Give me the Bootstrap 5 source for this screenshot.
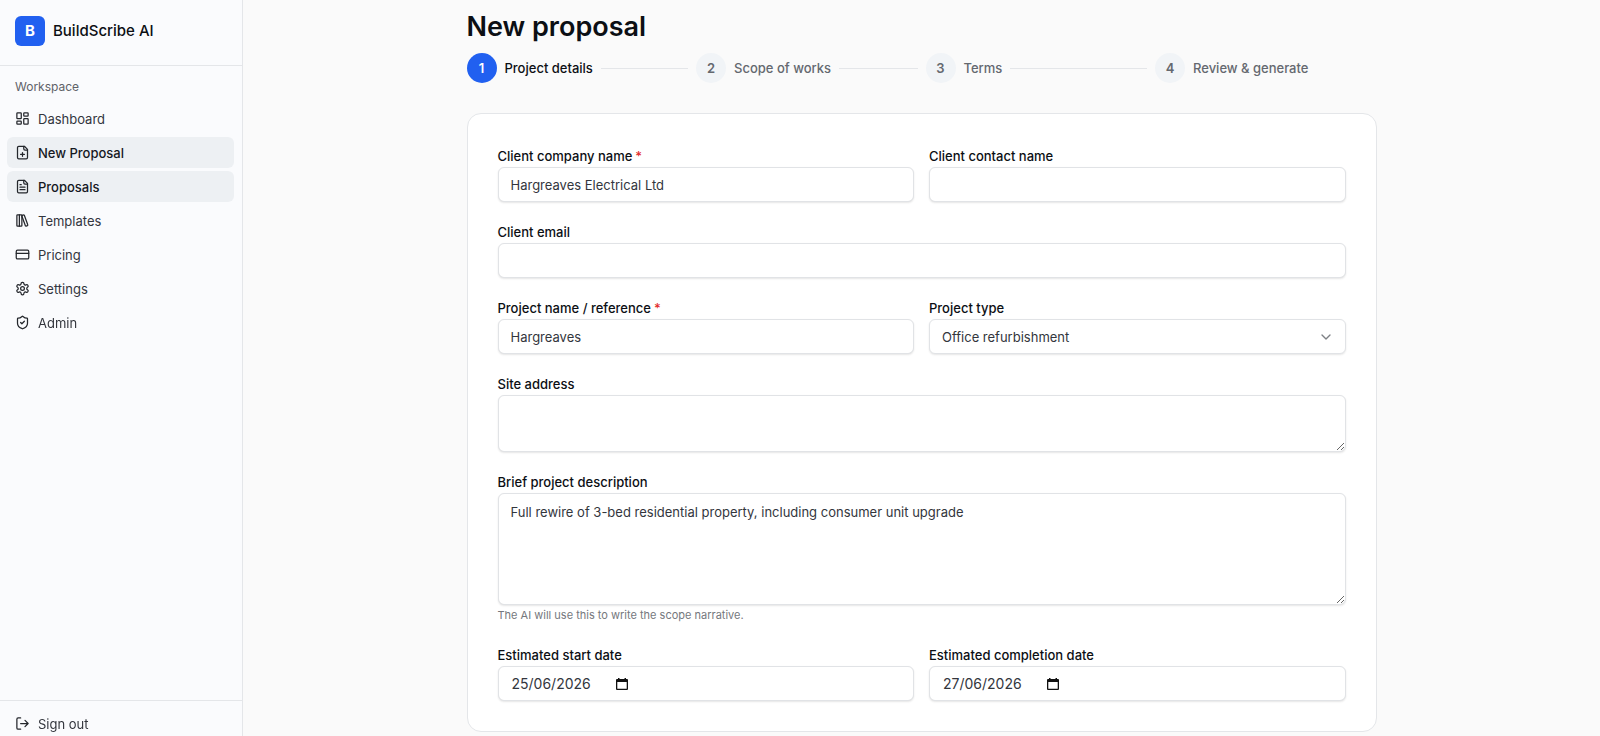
<!DOCTYPE html>
<html lang="en-GB">
<head>
<meta charset="utf-8">
<meta name="viewport" content="width=device-width, initial-scale=1">
<title>New proposal – BuildScribe AI</title>
<link href="https://cdn.jsdelivr.net/npm/bootstrap@5.3.0/dist/css/bootstrap.min.css" rel="stylesheet">
<style>
  :root { --line: #e4e6e9; --ink: #0c0f14; --muted: #64686f; --brand: #2160f0; }
  body { font-family: Inter, "Liberation Sans", sans-serif; font-size: 13px; line-height: 20px; color: var(--ink); background: #fafafa; }
  svg { fill: none; stroke: currentColor; stroke-width: 2; stroke-linecap: round; stroke-linejoin: round; flex: none; }
  .sidebar { width: 243px; height: 100vh; background: #fafbfd; border-right: 1px solid var(--line); }
  .brand-row { height: 66px; padding: 0 15px 4px; gap: 8px; border-bottom: 1px solid var(--line); font-size: 15px; font-weight: 500; }
  .brand-tile { width: 30px; height: 30px; border-radius: 6px; background: var(--brand); color: #fff; }
  .menu-title { font-size: 12px; padding: 11px 15px 0; color: #5f6268; }
  .menu { padding: 6px 8px 0 7px; gap: 3px; }
  .menu-link { height: 31px; padding: 0 8px; gap: 8px; border-radius: 6px; color: #33363d; text-decoration: none; border: 0; background: none; font-size: 13px; }
  .menu-link svg { width: 15px; height: 15px; color: #24272c; }
  .menu-link.current { background: #edf0f3; color: #16191f; font-weight: 500; }
  .side-foot { border-top: 1px solid var(--line); height: 36px; padding: 7px 8px 0 7px; }
  .page { max-width: 910px; padding: 9px 0 3px; }
  h1 { font-size: 27px; line-height: 36px; font-weight: 600; margin-bottom: 8px; }
  .steps { gap: 8px; margin-bottom: 30px; color: var(--muted); font-weight: 500; }
  .step { flex: 1 1 0; gap: 8px; white-space: nowrap; }
  .step-dot { width: 30px; height: 30px; border-radius: 50%; background: #f1f4f7; font-weight: 600; flex: none; }
  .step::after { content: ""; flex: 1; height: 1px; background: var(--line); }
  .step:last-child::after { display: none; }
  .step.active { color: var(--ink); }
  .step.active .step-dot { background: var(--brand); color: #fff; }
  .panel { background: #fff; border: 1px solid var(--line); border-radius: 14px; padding: 30px; }
  .fields { display: grid; grid-template-columns: 1fr 1fr; gap: 18px 15px; }
  .wide { grid-column: 1 / -1; }
  .fields label { display: block; padding: 2px 0 1px; line-height: 20px; font-weight: 500; }
  .req { color: #e32b2b; margin-left: 3px; }
  .fields .form-control, .fields .form-select { display: block; height: 35px; padding: 0 12px; font-size: 13px; line-height: 20px; color: #33363d; border: 1px solid #e1e3e6; border-radius: 6px; background-color: #fff; box-shadow: 0 1px 2px rgba(0,0,0,.1); }
  .fields .form-select { background-image: url("data:image/svg+xml,%3Csvg xmlns='http://www.w3.org/2000/svg' viewBox='0 0 24 24' fill='none' stroke='%237d8085' stroke-width='2' stroke-linecap='round' stroke-linejoin='round'%3E%3Cpath d='m6 9 6 6 6-6'/%3E%3C/svg%3E"); background-size: 16px 16px; background-position: right 11px center; }
  .fields textarea.form-control { padding: 8px 12px; min-height: 57px; }
  .fields textarea.form-control.tall { height: 112px; }
  .hint { color: #75787d; font-size: 11px; line-height: 20px; }
  .date-box input { width: 94px; border: 0; padding: 0 0 0 1px; outline: 0; background: none; color: inherit; font-size: 14px; }
  .date-box button { border: 0; background: none; padding: 0; margin-left: 10px; color: #111; }
  .date-box svg { stroke: none; fill: currentColor; }
</style>
</head>
<body>
<div class="d-flex">
  <aside class="sidebar d-flex flex-column flex-shrink-0 sticky-top">
    <div class="brand-row d-flex align-items-center">
      <span class="brand-tile d-flex align-items-center justify-content-center fw-bold">B</span>
      <span>BuildScribe AI</span>
    </div>
    <div class="menu-title">Workspace</div>
    <nav class="menu d-flex flex-column flex-grow-1">
      <a class="menu-link d-flex align-items-center" href="#"><svg viewBox="0 0 24 24"><rect x="3" y="3" width="7" height="9" rx="1"/><rect x="14" y="3" width="7" height="5" rx="1"/><rect x="14" y="12" width="7" height="9" rx="1"/><rect x="3" y="16" width="7" height="5" rx="1"/></svg>Dashboard</a>
      <a class="menu-link current d-flex align-items-center" href="#"><svg viewBox="0 0 24 24"><path d="M15 2H6a2 2 0 0 0-2 2v16a2 2 0 0 0 2 2h12a2 2 0 0 0 2-2V7Z"/><path d="M14 2v4a2 2 0 0 0 2 2h4M9 15h6M12 12v6"/></svg>New Proposal</a>
      <a class="menu-link current d-flex align-items-center" href="#"><svg viewBox="0 0 24 24"><path d="M15 2H6a2 2 0 0 0-2 2v16a2 2 0 0 0 2 2h12a2 2 0 0 0 2-2V7Z"/><path d="M14 2v4a2 2 0 0 0 2 2h4M10 9H8M16 13H8M16 17H8"/></svg>Proposals</a>
      <a class="menu-link d-flex align-items-center" href="#"><svg viewBox="0 0 24 24"><rect x="3" y="3" width="8" height="18" rx="1"/><path d="M7 3v18M20.4 18.9c.2.5-.1 1.1-.6 1.3l-1.9.7c-.5.2-1.1-.1-1.3-.6L11.1 5.1c-.2-.5.1-1.1.6-1.3l1.9-.7c.5-.2 1.1.1 1.3.6Z"/></svg>Templates</a>
      <a class="menu-link d-flex align-items-center" href="#"><svg viewBox="0 0 24 24"><rect x="2" y="5" width="20" height="14" rx="2"/><path d="M2 10h20"/></svg>Pricing</a>
      <a class="menu-link d-flex align-items-center" href="#"><svg viewBox="0 0 24 24"><path d="M12.22 2h-.44a2 2 0 0 0-2 2v.18a2 2 0 0 1-1 1.73l-.43.25a2 2 0 0 1-2 0l-.15-.08a2 2 0 0 0-2.73.73l-.22.38a2 2 0 0 0 .73 2.73l.15.1a2 2 0 0 1 1 1.72v.51a2 2 0 0 1-1 1.74l-.15.09a2 2 0 0 0-.73 2.73l.22.38a2 2 0 0 0 2.73.73l.15-.08a2 2 0 0 1 2 0l.43.25a2 2 0 0 1 1 1.73V20a2 2 0 0 0 2 2h.44a2 2 0 0 0 2-2v-.18a2 2 0 0 1 1-1.73l.43-.25a2 2 0 0 1 2 0l.15.08a2 2 0 0 0 2.73-.73l.22-.39a2 2 0 0 0-.73-2.73l-.15-.08a2 2 0 0 1-1-1.74v-.5a2 2 0 0 1 1-1.74l.15-.09a2 2 0 0 0 .73-2.73l-.22-.38a2 2 0 0 0-2.73-.73l-.15.08a2 2 0 0 1-2 0l-.43-.25a2 2 0 0 1-1-1.73V4a2 2 0 0 0-2-2z"/><circle cx="12" cy="12" r="3"/></svg>Settings</a>
      <a class="menu-link d-flex align-items-center" href="#"><svg viewBox="0 0 24 24"><path d="M20 13c0 5-3.5 7.5-7.66 8.95a1 1 0 0 1-.67-.01C7.5 20.5 4 18 4 13V6a1 1 0 0 1 1-1c2 0 4.5-1.2 6.24-2.72a1.17 1.17 0 0 1 1.52 0C14.51 3.81 17 5 19 5a1 1 0 0 1 1 1z"/><path d="m9 12 2 2 4-4"/></svg>Admin</a>
    </nav>
    <div class="side-foot">
      <button type="button" class="menu-link d-flex align-items-center w-100"><svg viewBox="0 0 24 24"><path d="M9 21H5a2 2 0 0 1-2-2V5a2 2 0 0 1 2-2h4M16 17l5-5-5-5M21 12H9"/></svg>Sign out</button>
    </div>
  </aside>

  <main class="flex-grow-1">
    <div class="page mx-auto">
      <h1>New proposal</h1>
      <div class="steps d-flex">
        <div class="step active d-flex align-items-center"><span class="step-dot d-flex align-items-center justify-content-center">1</span><span>Project details</span></div>
        <div class="step d-flex align-items-center"><span class="step-dot d-flex align-items-center justify-content-center">2</span><span>Scope of works</span></div>
        <div class="step d-flex align-items-center"><span class="step-dot d-flex align-items-center justify-content-center">3</span><span>Terms</span></div>
        <div class="step d-flex align-items-center"><span class="step-dot d-flex align-items-center justify-content-center">4</span><span>Review &amp; generate</span></div>
      </div>

      <form class="panel">
        <div class="fields">
          <div>
            <label for="company">Client company name<span class="req">*</span></label>
            <input id="company" type="text" class="form-control" value="Hargreaves Electrical Ltd">
          </div>
          <div>
            <label for="contact">Client contact name</label>
            <input id="contact" type="text" class="form-control">
          </div>
          <div class="wide">
            <label for="email">Client email</label>
            <input id="email" type="email" class="form-control">
          </div>
          <div>
            <label for="project">Project name / reference<span class="req">*</span></label>
            <input id="project" type="text" class="form-control" value="Hargreaves">
          </div>
          <div>
            <label for="kind">Project type</label>
            <select id="kind" class="form-select"><option>Office refurbishment</option></select>
          </div>
          <div class="wide">
            <label for="address">Site address</label>
            <textarea id="address" class="form-control"></textarea>
          </div>
          <div class="wide">
            <label for="brief">Brief project description</label>
            <textarea id="brief" class="form-control tall">Full rewire of 3-bed residential property, including consumer unit upgrade</textarea>
            <div class="hint">The AI will use this to write the scope narrative.</div>
          </div>
          <div>
            <label for="start">Estimated start date</label>
            <div class="form-control date-box d-flex align-items-center">
              <input id="start" type="text" value="25/06/2026">
              <button type="button" class="d-flex" aria-label="Pick start date"><svg width="14" height="14" viewBox="0 0 14 14"><path fill-rule="evenodd" d="M3 1h1.500v1h5v-1h1.500v1h1q1 0 1 1v9q0 1-1 1h-10q-1 0-1-1v-9q0-1 1-1h1zM2.300 5v6.700h9.400v-6.700z"/></svg></button>
            </div>
          </div>
          <div>
            <label for="finish">Estimated completion date</label>
            <div class="form-control date-box d-flex align-items-center">
              <input id="finish" type="text" value="27/06/2026">
              <button type="button" class="d-flex" aria-label="Pick completion date"><svg width="14" height="14" viewBox="0 0 14 14"><path fill-rule="evenodd" d="M3 1h1.500v1h5v-1h1.500v1h1q1 0 1 1v9q0 1-1 1h-10q-1 0-1-1v-9q0-1 1-1h1zM2.300 5v6.700h9.400v-6.700z"/></svg></button>
            </div>
          </div>
        </div>
      </form>
    </div>
  </main>
</div>
<script src="https://cdn.jsdelivr.net/npm/bootstrap@5.3.0/dist/js/bootstrap.bundle.min.js"></script>
</body>
</html>
